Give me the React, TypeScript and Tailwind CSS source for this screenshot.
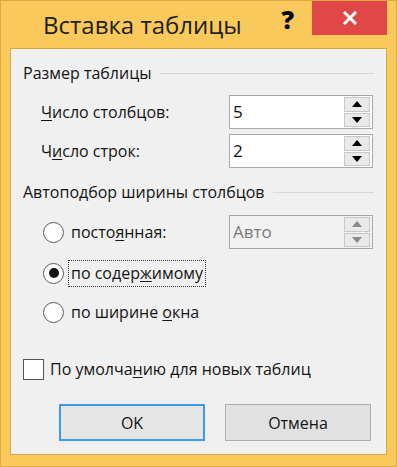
import React from "react";

const font = { fontFamily: '"Open Sans", "Noto Sans", "Liberation Sans", sans-serif' };

function Spinner({ value, disabled }: { value: string; disabled?: boolean }) {
  const arrow = disabled ? "#8a8a8a" : "#000";
  return (
    <div
      className={`flex h-[34px] w-[144px] items-center border ${
        disabled ? "border-[#a9a9a9] bg-[#f2f2f2]" : "border-[#a8a8a8] bg-white"
      } pr-[2px]`}
    >
      <div className={`flex-1 pl-[3px] text-[17px] ${disabled ? "text-[#7a7a7a]" : "text-[#111]"}`}>{value}</div>
      <div className="flex h-[30px] w-[26px] flex-col gap-[1px]">
        <div className="flex flex-1 items-center justify-center border border-[#c8c8c8] bg-[#e9e9e9]">
          <svg width="10" height="6" viewBox="0 0 10 6">
            <path d="M0 6 L5 0 L10 6 Z" fill={arrow} />
          </svg>
        </div>
        <div className="flex flex-1 items-center justify-center border border-[#c8c8c8] bg-[#e9e9e9]">
          <svg width="10" height="6" viewBox="0 0 10 6">
            <path d="M0 0 L10 0 L5 6 Z" fill={arrow} />
          </svg>
        </div>
      </div>
    </div>
  );
}

function Radio({ checked }: { checked?: boolean }) {
  return (
    <div className="flex h-[21px] w-[21px] items-center justify-center rounded-full border border-[#5a5a5a] bg-white">
      {checked && <div className="h-[10px] w-[10px] rounded-full bg-[#111]" />}
    </div>
  );
}

export default function App() {
  return (
    <div
      className="flex h-[467px] w-[397px] flex-col border border-[#dcaa45] bg-[#f9c95c] text-[#141414]"
      style={font}
    >
      {/* title bar */}
      <div className="flex h-[47px] items-start">
        <div className="pl-[42px] pt-[7px] text-[24px] leading-[34px] text-[#1e1e1e]">Вставка таблицы</div>
        <div className="ml-auto mt-[5px] mr-[18px] text-[25px] font-extrabold leading-[26px] text-black">?</div>
        <div className="mr-[9px] flex h-[34px] w-[75px] items-center justify-center bg-[#e04848]">
          <svg width="14" height="14" viewBox="0 0 14 14">
            <path d="M2 2 L12 12 M12 2 L2 12" stroke="#fff" strokeWidth="3" strokeLinecap="square" />
          </svg>
        </div>
      </div>

      {/* content */}
      <div className="mx-[9px] flex h-[407px] flex-col border border-[#d6a84d] bg-[#f0f0f0] pl-[12px] pr-[12px] text-[16px]">
        {/* section 1 header */}
        <div className="mt-[14px] flex h-[20px] items-center gap-[8px]">
          <span className="whitespace-nowrap leading-[20px]">Размер таблицы</span>
          <div className="h-px flex-1 bg-[#d8d8d8]" />
        </div>
        <div className="mt-[12px] flex items-center justify-between pl-[18px] pr-[1px]">
          <span>
            <span className="underline underline-offset-2">Ч</span>исло столбцов:
          </span>
          <Spinner value="5" />
        </div>
        <div className="mt-[5px] flex items-center justify-between pl-[18px] pr-[1px]">
          <span>
            Ч<span className="underline underline-offset-2">и</span>сло строк:
          </span>
          <Spinner value="2" />
        </div>

        {/* section 2 header */}
        <div className="mt-[14px] flex h-[20px] items-center gap-[8px]">
          <span className="whitespace-nowrap leading-[20px]">Автоподбор ширины столбцов</span>
          <div className="h-px flex-1 bg-[#d8d8d8]" />
        </div>
        <div className="mt-[13px] flex items-center pl-[20px] pr-[1px]">
          <Radio />
          <span className="ml-[7px]">
            посто<span className="underline underline-offset-2">я</span>нная:
          </span>
          <div className="ml-auto">
            <Spinner value="Авто" disabled />
          </div>
        </div>
        <div className="mt-[10px] flex h-[28px] items-center pl-[20px]">
          <Radio checked />
          <span className="ml-[4px] border border-dotted border-[#333] px-[2px] leading-[25px]">
            по содер<span className="underline underline-offset-2">ж</span>имому
          </span>
        </div>
        <div className="mt-[11px] flex h-[28px] items-center pl-[20px]">
          <Radio />
          <span className="ml-[7px]">
            по ширине <span className="underline underline-offset-2">о</span>кна
          </span>
        </div>

        {/* checkbox */}
        <div className="mt-[31px] flex items-center">
          <div className="h-[21px] w-[21px] border border-[#555] bg-white" />
          <span className="ml-[6px]">
            По умолча<span className="underline underline-offset-2">н</span>ию для новых таблиц
          </span>
        </div>

        {/* buttons */}
        <div className="mt-[23px] flex gap-[20px] pl-[36px]">
          <div className="flex h-[37px] w-[146px] items-center justify-center border-2 border-[#3d9ae6] bg-[#e5e5e5]">
            OK
          </div>
          <div className="flex h-[37px] w-[146px] items-center justify-center border border-[#adadad] bg-[#e1e1e1]">
            Отмена
          </div>
        </div>
      </div>
    </div>
  );
}
